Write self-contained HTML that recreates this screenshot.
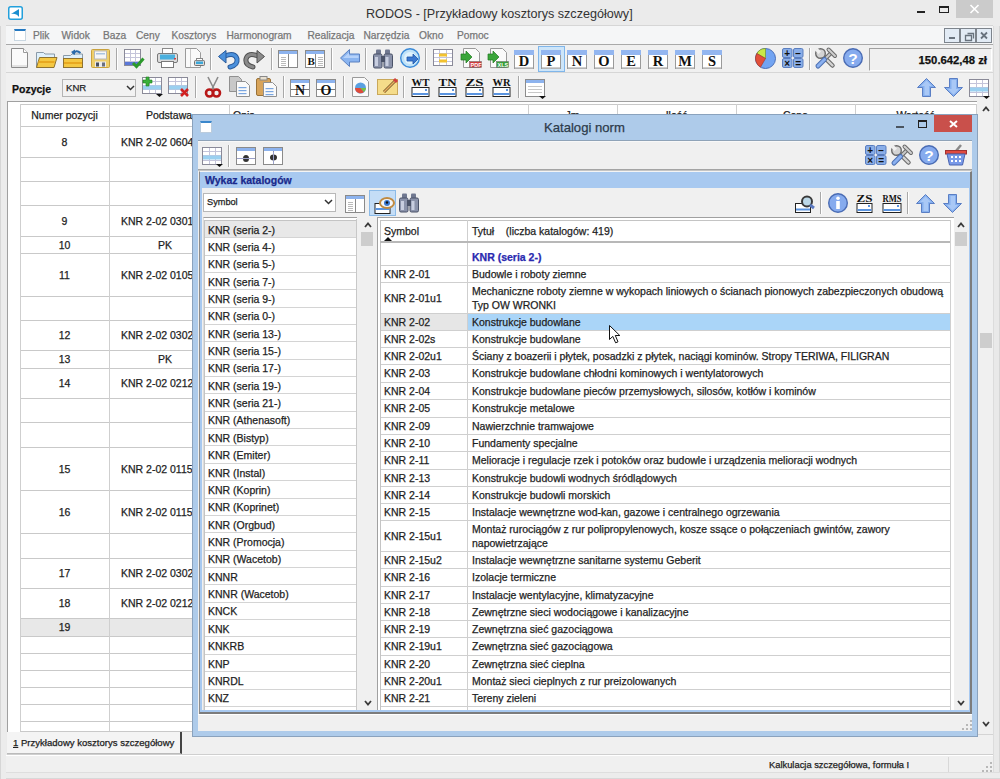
<!DOCTYPE html><html><head><meta charset="utf-8"><style>
html,body{margin:0;padding:0;width:1000px;height:779px;overflow:hidden;background:#f0f0f0;font-family:"Liberation Sans",sans-serif;font-size:10.5px;color:#1e1e1e;position:relative}
div{box-sizing:border-box;-webkit-text-stroke:0.25px currentColor}
</style></head><body>
<div style="position:absolute;left:0px;top:0px;width:1000px;height:779px;background:#ebebeb"></div>
<div style="position:absolute;left:0px;top:0px;width:1000px;height:26px;background:#ebebeb"></div>
<div style="position:absolute;left:366px;top:5.0px;height:18px;line-height:18px;white-space:nowrap;font-size:12.6px;color:#333;-webkit-text-stroke:0">RODOS - [Przykładowy kosztorys szczegółowy]</div>
<svg style="position:absolute;left:8px;top:6px" width="15" height="14" viewBox="0 0 15 14"><rect x="0.75" y="0.75" width="13.5" height="12.5" rx="2" fill="#fff" stroke="#22a0dc" stroke-width="1.5"/><path d="M3 8 L11 3 L11 11 Q8 7 3 8Z" fill="#1a8fd0"/></svg>
<div style="position:absolute;left:917px;top:11px;width:8px;height:2px;background:#222"></div>
<div style="position:absolute;left:939px;top:6px;width:10px;height:7px;border:1px solid #222;border-top-width:2px"></div>
<div style="position:absolute;left:956px;top:0px;width:37px;height:18px;background:#cbcbcb"></div>
<svg style="position:absolute;left:969px;top:4px" width="11" height="10"><path d="M1.5 1L9.5 9M9.5 1L1.5 9" stroke="#fff" stroke-width="1.6"/></svg>
<div style="position:absolute;left:6px;top:25px;width:987px;height:20px;background:#f5f6f7;border-top:1px solid #d6d6d6;border-bottom:1px solid #a9a9a9"></div>
<div style="position:absolute;left:14px;top:29px;width:12px;height:12px;background:#fff;border:1px solid #c9d6e0;border-top:2px solid #2479c2"></div>
<div style="position:absolute;left:33px;top:28.5px;height:14px;line-height:14px;white-space:nowrap;font-size:10.2px;color:#777">Plik</div>
<div style="position:absolute;left:61.5px;top:28.5px;height:14px;line-height:14px;white-space:nowrap;font-size:10.2px;color:#777">Widok</div>
<div style="position:absolute;left:103px;top:28.5px;height:14px;line-height:14px;white-space:nowrap;font-size:10.2px;color:#777">Baza</div>
<div style="position:absolute;left:136px;top:28.5px;height:14px;line-height:14px;white-space:nowrap;font-size:10.2px;color:#777">Ceny</div>
<div style="position:absolute;left:171.5px;top:28.5px;height:14px;line-height:14px;white-space:nowrap;font-size:10.2px;color:#777">Kosztorys</div>
<div style="position:absolute;left:226.5px;top:28.5px;height:14px;line-height:14px;white-space:nowrap;font-size:10.2px;color:#777">Harmonogram</div>
<div style="position:absolute;left:307.5px;top:28.5px;height:14px;line-height:14px;white-space:nowrap;font-size:10.2px;color:#777">Realizacja</div>
<div style="position:absolute;left:363.5px;top:28.5px;height:14px;line-height:14px;white-space:nowrap;font-size:10.2px;color:#777">Narzędzia</div>
<div style="position:absolute;left:419px;top:28.5px;height:14px;line-height:14px;white-space:nowrap;font-size:10.2px;color:#777">Okno</div>
<div style="position:absolute;left:457px;top:28.5px;height:14px;line-height:14px;white-space:nowrap;font-size:10.2px;color:#777">Pomoc</div>
<div style="position:absolute;left:944px;top:28px;width:16px;height:15px;background:#e2ebf5;border:1px solid #7d848c"></div>
<div style="position:absolute;left:960px;top:28px;width:16px;height:15px;background:#e2ebf5;border:1px solid #7d848c"></div>
<div style="position:absolute;left:976px;top:28px;width:16px;height:15px;background:#e2ebf5;border:1px solid #7d848c"></div>
<svg style="position:absolute;left:944px;top:28px" width="48" height="15"><rect x="5" y="9" width="6" height="2" fill="#69737e"/><path d="M21.5 7.5h6v5h-6z M23.5 5.5h6v5" fill="none" stroke="#69737e" stroke-width="1.3"/><path d="M37 4.5L43 10.5M43 4.5L37 10.5" stroke="#69737e" stroke-width="1.8"/></svg>
<div style="position:absolute;left:6px;top:45px;width:987px;height:28px;background:#f0f0f0;border-bottom:1px solid #d6d6d6"></div>
<div style="position:absolute;left:6px;top:73px;width:987px;height:28px;background:#f0f0f0"></div>
<div style="position:absolute;left:12px;top:81.5px;height:14px;line-height:14px;white-space:nowrap;font-weight:bold;font-size:10.5px;color:#111">Pozycje</div>
<div style="position:absolute;left:62px;top:79px;width:74px;height:18px;background:#f2f2f2;border:1px solid #b4b4b4"></div>
<div style="position:absolute;left:66px;top:81.0px;height:14px;line-height:14px;white-space:nowrap;font-size:9.6px">KNR</div>
<div style="position:absolute;left:7px;top:101px;width:970px;height:631px;background:#fff;border-top:1px solid #a0a0a0;border-left:1px solid #a0a0a0"></div>
<div style="position:absolute;left:20px;top:104px;width:956px;height:22px;background:#fff"></div>
<div style="position:absolute;left:20px;top:619px;width:956px;height:17px;background:#e8e8e8"></div>
<div style="position:absolute;left:20px;top:104px;width:956px;height:1px;background:#c9c9c9"></div>
<div style="position:absolute;left:20px;top:126px;width:956px;height:1px;background:#c9c9c9"></div>
<div style="position:absolute;left:20px;top:157px;width:956px;height:1px;background:#c9c9c9"></div>
<div style="position:absolute;left:20px;top:181px;width:956px;height:1px;background:#c9c9c9"></div>
<div style="position:absolute;left:20px;top:205px;width:956px;height:1px;background:#c9c9c9"></div>
<div style="position:absolute;left:20px;top:236px;width:956px;height:1px;background:#c9c9c9"></div>
<div style="position:absolute;left:20px;top:253px;width:956px;height:1px;background:#c9c9c9"></div>
<div style="position:absolute;left:20px;top:296px;width:956px;height:1px;background:#c9c9c9"></div>
<div style="position:absolute;left:20px;top:320px;width:956px;height:1px;background:#c9c9c9"></div>
<div style="position:absolute;left:20px;top:350px;width:956px;height:1px;background:#c9c9c9"></div>
<div style="position:absolute;left:20px;top:368px;width:956px;height:1px;background:#c9c9c9"></div>
<div style="position:absolute;left:20px;top:398px;width:956px;height:1px;background:#c9c9c9"></div>
<div style="position:absolute;left:20px;top:422px;width:956px;height:1px;background:#c9c9c9"></div>
<div style="position:absolute;left:20px;top:447px;width:956px;height:1px;background:#c9c9c9"></div>
<div style="position:absolute;left:20px;top:490px;width:956px;height:1px;background:#c9c9c9"></div>
<div style="position:absolute;left:20px;top:533px;width:956px;height:1px;background:#c9c9c9"></div>
<div style="position:absolute;left:20px;top:558px;width:956px;height:1px;background:#c9c9c9"></div>
<div style="position:absolute;left:20px;top:588px;width:956px;height:1px;background:#c9c9c9"></div>
<div style="position:absolute;left:20px;top:618px;width:956px;height:1px;background:#c9c9c9"></div>
<div style="position:absolute;left:20px;top:636px;width:956px;height:1px;background:#c9c9c9"></div>
<div style="position:absolute;left:20px;top:653px;width:956px;height:1px;background:#c9c9c9"></div>
<div style="position:absolute;left:20px;top:670px;width:956px;height:1px;background:#c9c9c9"></div>
<div style="position:absolute;left:20px;top:687px;width:956px;height:1px;background:#c9c9c9"></div>
<div style="position:absolute;left:20px;top:704px;width:956px;height:1px;background:#c9c9c9"></div>
<div style="position:absolute;left:20px;top:721px;width:956px;height:1px;background:#c9c9c9"></div>
<div style="position:absolute;left:20px;top:731px;width:956px;height:1px;background:#c9c9c9"></div>
<div style="position:absolute;left:20px;top:104px;width:1px;height:627px;background:#cfcfcf"></div>
<div style="position:absolute;left:109px;top:104px;width:1px;height:627px;background:#cfcfcf"></div>
<div style="position:absolute;left:229px;top:104px;width:1px;height:627px;background:#cfcfcf"></div>
<div style="position:absolute;left:528px;top:104px;width:1px;height:627px;background:#cfcfcf"></div>
<div style="position:absolute;left:617px;top:104px;width:1px;height:627px;background:#cfcfcf"></div>
<div style="position:absolute;left:736px;top:104px;width:1px;height:627px;background:#cfcfcf"></div>
<div style="position:absolute;left:855px;top:104px;width:1px;height:627px;background:#cfcfcf"></div>
<div style="position:absolute;left:976px;top:104px;width:1px;height:627px;background:#cfcfcf"></div>
<div style="position:absolute;left:20px;top:108.0px;height:14px;line-height:14px;white-space:nowrap;width:89px;text-align:center;">Numer pozycji</div>
<div style="position:absolute;left:109px;top:108.0px;height:14px;line-height:14px;white-space:nowrap;width:120px;text-align:center;">Podstawa</div>
<div style="position:absolute;left:233px;top:108.0px;height:14px;line-height:14px;white-space:nowrap;">Opis</div>
<div style="position:absolute;left:528px;top:108.0px;height:14px;line-height:14px;white-space:nowrap;width:89px;text-align:center;">Jm</div>
<div style="position:absolute;left:617px;top:108.0px;height:14px;line-height:14px;white-space:nowrap;width:119px;text-align:center;">Ilość</div>
<div style="position:absolute;left:736px;top:108.0px;height:14px;line-height:14px;white-space:nowrap;width:119px;text-align:center;">Cena</div>
<div style="position:absolute;left:855px;top:108.0px;height:14px;line-height:14px;white-space:nowrap;width:121px;text-align:center;">Wartość</div>
<div style="position:absolute;left:20px;top:134.5px;height:14px;line-height:14px;white-space:nowrap;width:89px;text-align:center;">8</div>
<div style="position:absolute;left:121px;top:134.5px;height:14px;line-height:14px;white-space:nowrap;">KNR 2-02 0604</div>
<div style="position:absolute;left:20px;top:213.5px;height:14px;line-height:14px;white-space:nowrap;width:89px;text-align:center;">9</div>
<div style="position:absolute;left:121px;top:213.5px;height:14px;line-height:14px;white-space:nowrap;">KNR 2-02 0301</div>
<div style="position:absolute;left:20px;top:237.5px;height:14px;line-height:14px;white-space:nowrap;width:89px;text-align:center;">10</div>
<div style="position:absolute;left:105px;top:237.5px;height:14px;line-height:14px;white-space:nowrap;width:120px;text-align:center;">PK</div>
<div style="position:absolute;left:20px;top:267.5px;height:14px;line-height:14px;white-space:nowrap;width:89px;text-align:center;">11</div>
<div style="position:absolute;left:121px;top:267.5px;height:14px;line-height:14px;white-space:nowrap;">KNR 2-02 0105</div>
<div style="position:absolute;left:20px;top:328.0px;height:14px;line-height:14px;white-space:nowrap;width:89px;text-align:center;">12</div>
<div style="position:absolute;left:121px;top:328.0px;height:14px;line-height:14px;white-space:nowrap;">KNR 2-02 0302</div>
<div style="position:absolute;left:20px;top:352.0px;height:14px;line-height:14px;white-space:nowrap;width:89px;text-align:center;">13</div>
<div style="position:absolute;left:105px;top:352.0px;height:14px;line-height:14px;white-space:nowrap;width:120px;text-align:center;">PK</div>
<div style="position:absolute;left:20px;top:376.0px;height:14px;line-height:14px;white-space:nowrap;width:89px;text-align:center;">14</div>
<div style="position:absolute;left:121px;top:376.0px;height:14px;line-height:14px;white-space:nowrap;">KNR 2-02 0212</div>
<div style="position:absolute;left:20px;top:461.5px;height:14px;line-height:14px;white-space:nowrap;width:89px;text-align:center;">15</div>
<div style="position:absolute;left:121px;top:461.5px;height:14px;line-height:14px;white-space:nowrap;">KNR 2-02 0115</div>
<div style="position:absolute;left:20px;top:504.5px;height:14px;line-height:14px;white-space:nowrap;width:89px;text-align:center;">16</div>
<div style="position:absolute;left:121px;top:504.5px;height:14px;line-height:14px;white-space:nowrap;">KNR 2-02 0115</div>
<div style="position:absolute;left:20px;top:566.0px;height:14px;line-height:14px;white-space:nowrap;width:89px;text-align:center;">17</div>
<div style="position:absolute;left:121px;top:566.0px;height:14px;line-height:14px;white-space:nowrap;">KNR 2-02 0302</div>
<div style="position:absolute;left:20px;top:596.0px;height:14px;line-height:14px;white-space:nowrap;width:89px;text-align:center;">18</div>
<div style="position:absolute;left:121px;top:596.0px;height:14px;line-height:14px;white-space:nowrap;">KNR 2-02 0212</div>
<div style="position:absolute;left:20px;top:620.0px;height:14px;line-height:14px;white-space:nowrap;width:89px;text-align:center;">19</div>
<div style="position:absolute;left:977px;top:101px;width:16px;height:634px;background:#f0f0f0"></div>
<div style="position:absolute;left:980px;top:333px;width:12px;height:15px;background:#cdcdcd"></div>
<svg style="position:absolute;left:982px;top:106px" width="8" height="6"><path d="M1 5L4 1.5L7 5" fill="none" stroke="#3a3a3a" stroke-width="1.8"/></svg>
<svg style="position:absolute;left:982px;top:721px" width="8" height="6"><path d="M1 1L4 4.5L7 1" fill="none" stroke="#3a3a3a" stroke-width="1.8"/></svg>
<div style="position:absolute;left:7px;top:732px;width:986px;height:23px;background:#f0f0f0"></div>
<div style="position:absolute;left:7px;top:754px;width:986px;height:1px;background:#cfcfcf"></div>
<div style="position:absolute;left:977px;top:734px;width:16px;height:1px;background:#d4d4d4"></div>
<div style="position:absolute;left:7px;top:732px;width:175px;height:22px;background:#f4f4f4;border-right:2px solid #444;border-bottom:1px solid #bbb"></div>
<div style="position:absolute;left:13px;top:736.0px;height:14px;line-height:14px;white-space:nowrap;font-size:9.55px;color:#222"><u>1</u> Przykładowy kosztorys szczegółowy</div>
<div style="position:absolute;left:6px;top:755px;width:987px;height:17px;background:#f0f0f0;border-top:1px solid #fff"></div>
<div style="position:absolute;left:769px;top:758.0px;height:14px;line-height:14px;white-space:nowrap;font-size:9.35px;color:#222">Kalkulacja szczegółowa, formuła I</div>
<div style="position:absolute;left:948px;top:757px;width:1px;height:16px;background:#d8d8d8"></div>
<div style="position:absolute;left:993px;top:26px;width:7px;height:753px;background:#e9e9e9;border-left:1px solid #dcdcdc;border-right:1px solid #d6d6d6"></div>
<div style="position:absolute;left:0px;top:772px;width:1000px;height:7px;background:#ececec;border-top:1px solid #dedede;border-bottom:1px solid #d8d8d8"></div>
<div style="position:absolute;left:0px;top:26px;width:6px;height:753px;background:#ececec;border-left:1px solid #d6d6d6"></div>
<svg style="position:absolute;left:11px;top:48px;overflow:visible" width="17" height="20" viewBox="0 0 17 20"><path d="M0.5 0.5H12.5L16.5 4.5V19.5H0.5Z" fill="#fafafa" stroke="#8c8c8c"/><path d="M12.5 0.5V4.5H16.5" fill="#fff" stroke="#9a9a9a"/><rect x="1" y="17" width="15" height="2" fill="#e2e2e2"/></svg>
<svg style="position:absolute;left:36px;top:51px;overflow:visible" width="22" height="17" viewBox="0 0 22 17"><path d="M0.5 16.5V1.5H7.5L9 3H18.5V7" fill="#dff0fb" stroke="#8a9aa8"/><path d="M0.5 16.5L3.5 6.5H21L18 16.5Z" fill="#f5c842" stroke="#8f7330"/><rect x="2.5" y="10" width="16" height="2" fill="#e8a820"/></svg>
<svg style="position:absolute;left:63px;top:49px;overflow:visible" width="20" height="19" viewBox="0 0 20 19"><path d="M0.5 18.5V6.5H7.5L9 5H19.5V18.5Z" fill="#dff0fb" stroke="#8a9aa8"/><rect x="0.5" y="9.5" width="19" height="9" fill="#f5c842" stroke="#8f7330"/><rect x="1" y="13" width="18" height="2" fill="#e8a820"/><path d="M10 5 Q13 0 17.5 4" fill="none" stroke="#2a6aaa" stroke-width="2"/><path d="M8 3L12 0.5L12 6Z" fill="#2a6aaa"/></svg>
<svg style="position:absolute;left:91px;top:49px;overflow:visible" width="19" height="19" viewBox="0 0 19 19"><rect x="0.5" y="0.5" width="18" height="18" rx="1" fill="#efcf6a" stroke="#c9a23e"/><rect x="3.5" y="2" width="12" height="8" fill="#f6f6f6" stroke="#b9b9b9"/><rect x="5" y="4" width="9" height="1.5" fill="#a9c4e0"/><rect x="4" y="12.5" width="11" height="5.5" fill="#ececec"/><rect x="5" y="13.5" width="3" height="4" fill="#4a5060"/><rect x="11" y="13.5" width="3" height="4" fill="#6a7080"/></svg>
<div style="position:absolute;left:116px;top:48px;width:1px;height:22px;background:#a8a8a8"></div>
<div style="position:absolute;left:117px;top:48px;width:1px;height:22px;background:#ffffff"></div>
<svg style="position:absolute;left:124px;top:49px;overflow:visible" width="20" height="19" viewBox="0 0 20 19"><rect x="0.5" y="0.5" width="16" height="16" fill="#fff" stroke="#8a8a98"/><line x1="1" y1="4.5" x2="16" y2="4.5" stroke="#c4c4da"/><line x1="1" y1="8.5" x2="16" y2="8.5" stroke="#c4c4da"/><line x1="1" y1="12.5" x2="16" y2="12.5" stroke="#c4c4da"/><line x1="6.5" y1="1" x2="6.5" y2="16" stroke="#c4c4da"/><line x1="11.5" y1="1" x2="11.5" y2="16" stroke="#c4c4da"/><rect x="1" y="13" width="15" height="3" fill="#5b78d8"/><path d="M9 14L12.5 17.5L19.5 9.5" fill="none" stroke="#2c9a2c" stroke-width="3"/></svg>
<div style="position:absolute;left:150px;top:48px;width:1px;height:22px;background:#a8a8a8"></div>
<div style="position:absolute;left:151px;top:48px;width:1px;height:22px;background:#ffffff"></div>
<svg style="position:absolute;left:157px;top:48px;overflow:visible" width="21" height="20" viewBox="0 0 21 20"><rect x="5.5" y="0.5" width="10" height="6" fill="#fff" stroke="#8a8a8a"/><rect x="0.5" y="5.5" width="20" height="9" rx="1.5" fill="#dcdcdc" stroke="#7a7a7a"/><rect x="3" y="6.5" width="15" height="5" fill="#4bb0de"/><rect x="4.5" y="13.5" width="12" height="6" fill="#fff" stroke="#7a7a7a"/><rect x="17" y="10" width="2" height="1.5" fill="#d04040"/></svg>
<svg style="position:absolute;left:185px;top:48px;overflow:visible" width="20" height="20" viewBox="0 0 20 20"><path d="M0.5 0.5H11.5L15.5 4.5V19.5H0.5Z" fill="#fafafa" stroke="#9a9a9a"/><line x1="5.5" y1="1" x2="5.5" y2="19" stroke="#c8c8c8"/><rect x="9.5" y="12.5" width="10" height="5" rx="1" fill="#d8d8d8" stroke="#707070"/><rect x="11" y="13.5" width="7" height="2.5" fill="#3ba8da"/><rect x="11.5" y="10.5" width="6" height="2" fill="#fff" stroke="#888"/></svg>
<div style="position:absolute;left:210px;top:48px;width:1px;height:22px;background:#a8a8a8"></div>
<div style="position:absolute;left:211px;top:48px;width:1px;height:22px;background:#ffffff"></div>
<svg style="position:absolute;left:218px;top:50px;overflow:visible" width="21" height="18" viewBox="0 0 21 18"><path d="M7 6 Q17 2 19 9 Q20 15 12 17" fill="none" stroke="#2a5a9a" stroke-width="5" stroke-linecap="round"/><path d="M7 6 Q17 2 19 9 Q20 15 12 17" fill="none" stroke="#4a90dc" stroke-width="3" stroke-linecap="round"/><path d="M0.5 6.5L8 0.5V13Z" fill="#4a90dc" stroke="#2a5a9a"/></svg>
<svg style="position:absolute;left:244px;top:50px;overflow:visible" width="21" height="18" viewBox="0 0 21 18"><g transform="translate(21,0) scale(-1,1)"><path d="M7 6 Q17 2 19 9 Q20 15 12 17" fill="none" stroke="#505050" stroke-width="5" stroke-linecap="round"/><path d="M7 6 Q17 2 19 9 Q20 15 12 17" fill="none" stroke="#8a8a8a" stroke-width="3" stroke-linecap="round"/><path d="M0.5 6.5L8 0.5V13Z" fill="#8a8a8a" stroke="#505050"/></g></svg>
<div style="position:absolute;left:271px;top:48px;width:1px;height:22px;background:#a8a8a8"></div>
<div style="position:absolute;left:272px;top:48px;width:1px;height:22px;background:#ffffff"></div>
<svg style="position:absolute;left:278px;top:50px;overflow:visible" width="20" height="18" viewBox="0 0 20 18"><rect x="0.5" y="0.5" width="19" height="17" fill="#fff" stroke="#8a8a8a"/><rect x="1" y="1" width="18" height="3" fill="#8db3ee"/><line x1="10.5" y1="4" x2="10.5" y2="17" stroke="#8a8a8a"/><line x1="3" y1="7.5" x2="8" y2="7.5" stroke="#bbb"/><line x1="3" y1="9.5" x2="8" y2="9.5" stroke="#bbb"/><line x1="3" y1="11.5" x2="8" y2="11.5" stroke="#bbb"/><line x1="3" y1="13.5" x2="8" y2="13.5" stroke="#bbb"/><line x1="3" y1="15.5" x2="8" y2="15.5" stroke="#bbb"/></svg>
<svg style="position:absolute;left:305px;top:50px;overflow:visible" width="20" height="18" viewBox="0 0 20 18"><rect x="0.5" y="0.5" width="19" height="17" fill="#fff" stroke="#8a8a8a"/><rect x="1" y="1" width="18" height="3" fill="#8db3ee"/><line x1="10.5" y1="4" x2="10.5" y2="17" stroke="#8a8a8a"/><line x1="13" y1="7.5" x2="18" y2="7.5" stroke="#bbb"/><line x1="13" y1="9.5" x2="18" y2="9.5" stroke="#bbb"/><line x1="13" y1="11.5" x2="18" y2="11.5" stroke="#bbb"/><line x1="13" y1="13.5" x2="18" y2="13.5" stroke="#bbb"/><line x1="13" y1="15.5" x2="18" y2="15.5" stroke="#bbb"/><text x="2.5" y="15" font-family="Liberation Serif" font-weight="bold" font-size="11" fill="#111">B</text></svg>
<div style="position:absolute;left:331px;top:48px;width:1px;height:22px;background:#a8a8a8"></div>
<div style="position:absolute;left:332px;top:48px;width:1px;height:22px;background:#ffffff"></div>
<svg style="position:absolute;left:340px;top:49px;overflow:visible" width="20" height="18" viewBox="0 0 20 18"><path d="M0.5 9L9.5 0.5V5H19.5V13H9.5V17.5Z" fill="#8ab4f0" stroke="#5a80c0"/><path d="M3 9L9 3.5V6.5H18.5V9Z" fill="#b6d2fa"/></svg>
<div style="position:absolute;left:365px;top:48px;width:1px;height:22px;background:#a8a8a8"></div>
<div style="position:absolute;left:366px;top:48px;width:1px;height:22px;background:#ffffff"></div>
<svg style="position:absolute;left:373px;top:49px;overflow:visible" width="20" height="19" viewBox="0 0 20 19"><rect x="3" y="0.5" width="5" height="5" rx="1" fill="#707890"/><rect x="12" y="0.5" width="5" height="5" rx="1" fill="#707890"/><rect x="0.5" y="5" width="8.5" height="14" rx="1.5" fill="#8a92aa" stroke="#4a5268"/><rect x="11" y="5" width="8.5" height="14" rx="1.5" fill="#8a92aa" stroke="#4a5268"/><rect x="8" y="7" width="4" height="6" fill="#4a5268"/><rect x="2" y="8" width="3" height="9" fill="#c8cee0"/><rect x="12.5" y="8" width="3" height="9" fill="#c8cee0"/></svg>
<svg style="position:absolute;left:400px;top:48px;overflow:visible" width="20" height="20" viewBox="0 0 20 20"><circle cx="10" cy="10" r="9.3" fill="#bfe2f8" stroke="#3a8ad8" stroke-width="1.4"/><circle cx="10" cy="10" r="6" fill="#dff2fd"/><path d="M7 9H13V6L18 11L13 16V13H7Z" fill="#3a78d0" stroke="#1e56a8" stroke-width="0.8"/></svg>
<div style="position:absolute;left:425px;top:48px;width:1px;height:22px;background:#a8a8a8"></div>
<div style="position:absolute;left:426px;top:48px;width:1px;height:22px;background:#ffffff"></div>
<svg style="position:absolute;left:433px;top:49px;overflow:visible" width="20" height="17" viewBox="0 0 20 17"><rect x="0.5" y="0.5" width="19" height="16" fill="#fff" stroke="#8a8a98"/><line x1="1" y1="4.5" x2="19" y2="4.5" stroke="#c4c4da"/><line x1="1" y1="8.5" x2="19" y2="8.5" stroke="#c4c4da"/><line x1="1" y1="12.5" x2="19" y2="12.5" stroke="#c4c4da"/><line x1="6.5" y1="1" x2="6.5" y2="16" stroke="#c4c4da"/><line x1="13.5" y1="1" x2="13.5" y2="16" stroke="#c4c4da"/><rect x="6" y="4.5" width="8" height="3" fill="#f2c230"/><rect x="6" y="10.5" width="8" height="3" fill="#f2c230"/></svg>
<svg style="position:absolute;left:461px;top:48px;overflow:visible" width="20" height="20" viewBox="0 0 20 20"><path d="M2.5 0.5H14.5L18.5 4.5V19.5H2.5Z" fill="#fafafa" stroke="#9a9a9a"/><path d="M0 6H5V3L11 9L5 15V12H0Z" fill="#3aa63a" stroke="#207a20" stroke-width="0.7"/><rect x="8.5" y="13.5" width="12" height="6" fill="#d03a3a" stroke="#666" stroke-width="0.5"/><text x="9.5" y="19" font-family="Liberation Sans" font-weight="bold" font-size="5.5" fill="#fff">PDF</text></svg>
<svg style="position:absolute;left:488px;top:48px;overflow:visible" width="20" height="20" viewBox="0 0 20 20"><path d="M2.5 0.5H14.5L18.5 4.5V19.5H2.5Z" fill="#fafafa" stroke="#9a9a9a"/><path d="M0 6H5V3L11 9L5 15V12H0Z" fill="#3aa63a" stroke="#207a20" stroke-width="0.7"/><rect x="8.5" y="13.5" width="12" height="6" fill="#3aa03a" stroke="#666" stroke-width="0.5"/><text x="9.5" y="19" font-family="Liberation Sans" font-weight="bold" font-size="5.5" fill="#fff">XLS</text></svg>
<div style="position:absolute;left:538px;top:46px;width:27px;height:26px;background:#cde5f9;border:1px solid #80b6ea"></div>
<svg style="position:absolute;left:514px;top:50px;overflow:visible" width="20" height="19" viewBox="0 0 20 19"><rect x="0.5" y="0.5" width="19" height="18" fill="#fff" stroke="#9a9a9a"/><rect x="0" y="0" width="20" height="5" fill="#93b6f0"/><rect x="1" y="17" width="18" height="1.5" fill="#cfcfcf"/><text x="10" y="16.2" text-anchor="middle" font-family="Liberation Serif" font-weight="bold" font-size="14.5" fill="#111">D</text></svg>
<svg style="position:absolute;left:541px;top:50px;overflow:visible" width="20" height="19" viewBox="0 0 20 19"><rect x="0.5" y="0.5" width="19" height="18" fill="#fff" stroke="#9a9a9a"/><rect x="0" y="0" width="20" height="5" fill="#93b6f0"/><rect x="1" y="17" width="18" height="1.5" fill="#cfcfcf"/><text x="10" y="16.2" text-anchor="middle" font-family="Liberation Serif" font-weight="bold" font-size="14.5" fill="#111">P</text></svg>
<svg style="position:absolute;left:567px;top:50px;overflow:visible" width="20" height="19" viewBox="0 0 20 19"><rect x="0.5" y="0.5" width="19" height="18" fill="#fff" stroke="#9a9a9a"/><rect x="0" y="0" width="20" height="5" fill="#93b6f0"/><rect x="1" y="17" width="18" height="1.5" fill="#cfcfcf"/><text x="10" y="16.2" text-anchor="middle" font-family="Liberation Serif" font-weight="bold" font-size="14.5" fill="#111">N</text></svg>
<svg style="position:absolute;left:594px;top:50px;overflow:visible" width="20" height="19" viewBox="0 0 20 19"><rect x="0.5" y="0.5" width="19" height="18" fill="#fff" stroke="#9a9a9a"/><rect x="0" y="0" width="20" height="5" fill="#93b6f0"/><rect x="1" y="17" width="18" height="1.5" fill="#cfcfcf"/><text x="10" y="16.2" text-anchor="middle" font-family="Liberation Serif" font-weight="bold" font-size="14.5" fill="#111">O</text></svg>
<svg style="position:absolute;left:621px;top:50px;overflow:visible" width="20" height="19" viewBox="0 0 20 19"><rect x="0.5" y="0.5" width="19" height="18" fill="#fff" stroke="#9a9a9a"/><rect x="0" y="0" width="20" height="5" fill="#93b6f0"/><rect x="1" y="17" width="18" height="1.5" fill="#cfcfcf"/><text x="10" y="16.2" text-anchor="middle" font-family="Liberation Serif" font-weight="bold" font-size="14.5" fill="#111">E</text></svg>
<svg style="position:absolute;left:648px;top:50px;overflow:visible" width="20" height="19" viewBox="0 0 20 19"><rect x="0.5" y="0.5" width="19" height="18" fill="#fff" stroke="#9a9a9a"/><rect x="0" y="0" width="20" height="5" fill="#93b6f0"/><rect x="1" y="17" width="18" height="1.5" fill="#cfcfcf"/><text x="10" y="16.2" text-anchor="middle" font-family="Liberation Serif" font-weight="bold" font-size="14.5" fill="#111">R</text></svg>
<svg style="position:absolute;left:675px;top:50px;overflow:visible" width="20" height="19" viewBox="0 0 20 19"><rect x="0.5" y="0.5" width="19" height="18" fill="#fff" stroke="#9a9a9a"/><rect x="0" y="0" width="20" height="5" fill="#93b6f0"/><rect x="1" y="17" width="18" height="1.5" fill="#cfcfcf"/><text x="10" y="16.2" text-anchor="middle" font-family="Liberation Serif" font-weight="bold" font-size="14.5" fill="#111">M</text></svg>
<svg style="position:absolute;left:702px;top:50px;overflow:visible" width="20" height="19" viewBox="0 0 20 19"><rect x="0.5" y="0.5" width="19" height="18" fill="#fff" stroke="#9a9a9a"/><rect x="0" y="0" width="20" height="5" fill="#93b6f0"/><rect x="1" y="17" width="18" height="1.5" fill="#cfcfcf"/><text x="10" y="16.2" text-anchor="middle" font-family="Liberation Serif" font-weight="bold" font-size="14.5" fill="#111">S</text></svg>
<svg style="position:absolute;left:755px;top:48px;overflow:visible" width="22" height="21" viewBox="0 0 22 21"><circle cx="10.5" cy="10.5" r="10" fill="#72a4f2" stroke="#4a6fb8"/><path d="M10.5 10.5L10.5 0.5A10 10 0 0 0 1.84 5.5Z" fill="#c8e848" stroke="#6a8a20" stroke-width="0.6"/><path d="M10.5 10.5L1.84 5.5A10 10 0 0 0 5.5 19.16Z" fill="#e2503a" stroke="#a83020" stroke-width="0.6"/></svg>
<svg style="position:absolute;left:782px;top:48px;overflow:visible" width="22" height="20" viewBox="0 0 22 20"><rect x="0.5" y="0.5" width="9.5" height="9" rx="1.5" fill="#8aaee8" stroke="#5a7ec0"/><text x="5.2" y="8.6" text-anchor="middle" font-family="Liberation Sans" font-weight="bold" font-size="10" fill="#111">+</text><rect x="11.5" y="0.5" width="9.5" height="9" rx="1.5" fill="#8aaee8" stroke="#5a7ec0"/><text x="16.2" y="8.6" text-anchor="middle" font-family="Liberation Sans" font-weight="bold" font-size="10" fill="#111">−</text><rect x="0.5" y="10.5" width="9.5" height="9" rx="1.5" fill="#8aaee8" stroke="#5a7ec0"/><text x="5.2" y="18.6" text-anchor="middle" font-family="Liberation Sans" font-weight="bold" font-size="10" fill="#111">×</text><rect x="11.5" y="10.5" width="9.5" height="9" rx="1.5" fill="#8aaee8" stroke="#5a7ec0"/><text x="16.2" y="18.6" text-anchor="middle" font-family="Liberation Sans" font-weight="bold" font-size="10" fill="#111">=</text></svg>
<div style="position:absolute;left:809px;top:48px;width:1px;height:22px;background:#a8a8a8"></div>
<div style="position:absolute;left:810px;top:48px;width:1px;height:22px;background:#ffffff"></div>
<svg style="position:absolute;left:815px;top:48px;overflow:visible" width="22" height="20" viewBox="0 0 22 20"><path d="M7 7L17.5 17.5" stroke="#6a6a6a" stroke-width="4.5" stroke-linecap="round"/><path d="M7 7L17.5 17.5" stroke="#d4d4d4" stroke-width="2.4" stroke-linecap="round"/><circle cx="5.5" cy="5.5" r="4.8" fill="#d4d4d4" stroke="#6a6a6a" stroke-width="1.4"/><path d="M0 2.5L3.5 6L6 3.5L2.5 0Z" fill="#f0f0f0"/><path d="M10 11L17 4" stroke="#6a6a6a" stroke-width="4"/><path d="M10 11L17 4" stroke="#c8c8c8" stroke-width="2"/><path d="M13.5 1.5L20 8" stroke="#6a6a6a" stroke-width="4" stroke-linecap="round"/><path d="M13.5 1.5L20 8" stroke="#d0d0d0" stroke-width="2" stroke-linecap="round"/><path d="M3 18L9.5 11.5" stroke="#4a6eb0" stroke-width="5" stroke-linecap="round"/><path d="M3 18L9.5 11.5" stroke="#8ab0f0" stroke-width="3" stroke-linecap="round"/></svg>
<svg style="position:absolute;left:843px;top:48px;overflow:visible" width="20" height="20" viewBox="0 0 20 20"><circle cx="10" cy="10" r="9.3" fill="#86abee" stroke="#4a6cb4" stroke-width="1.4"/><text x="10" y="15.6" text-anchor="middle" font-family="Liberation Sans" font-weight="bold" font-size="15.5" fill="#fff">?</text></svg>
<div style="position:absolute;left:869px;top:48px;width:123px;height:23px;background:#f0f0f0;border-top:1px solid #a0a0a0;border-left:1px solid #a0a0a0;border-bottom:1px solid #fff;border-right:1px solid #fff"></div>
<div style="position:absolute;left:880px;top:52.5px;height:14px;line-height:14px;white-space:nowrap;width:107px;text-align:right;font-weight:bold;font-size:11.3px;color:#111">150.642,48 zł</div>
<svg style="position:absolute;left:142px;top:77px;overflow:visible" width="20" height="17" viewBox="0 0 20 17"><rect x="0.5" y="0.5" width="19" height="16" fill="#fff" stroke="#8a8a98"/><line x1="1" y1="4.5" x2="19" y2="4.5" stroke="#c4c4da"/><line x1="1" y1="8.5" x2="19" y2="8.5" stroke="#c4c4da"/><line x1="1" y1="12.5" x2="19" y2="12.5" stroke="#c4c4da"/><line x1="7.5" y1="1" x2="7.5" y2="16" stroke="#c4c4da"/><line x1="13.5" y1="1" x2="13.5" y2="16" stroke="#c4c4da"/><rect x="1" y="8.5" width="18" height="4" fill="#9bd0f0"/><path d="M4 0H7V3H10V6H7V9H4V6H1V3H4Z" fill="#3ab03a" stroke="#208020" stroke-width="0.6"/><path d="M14 17H21L17.5 20Z" fill="#111"/></svg>
<svg style="position:absolute;left:168px;top:77px;overflow:visible" width="20" height="17" viewBox="0 0 20 17"><rect x="0.5" y="0.5" width="19" height="16" fill="#fff" stroke="#8a8a98"/><line x1="1" y1="4.5" x2="19" y2="4.5" stroke="#c4c4da"/><line x1="1" y1="8.5" x2="19" y2="8.5" stroke="#c4c4da"/><line x1="1" y1="12.5" x2="19" y2="12.5" stroke="#c4c4da"/><line x1="7.5" y1="1" x2="7.5" y2="16" stroke="#c4c4da"/><line x1="13.5" y1="1" x2="13.5" y2="16" stroke="#c4c4da"/><rect x="1" y="8.5" width="18" height="4" fill="#9bd0f0"/><path d="M13 12L20 19M20 12L13 19" stroke="#d02020" stroke-width="2.6"/></svg>
<div style="position:absolute;left:195px;top:76px;width:1px;height:22px;background:#a8a8a8"></div>
<div style="position:absolute;left:196px;top:76px;width:1px;height:22px;background:#ffffff"></div>
<svg style="position:absolute;left:205px;top:77px;overflow:visible" width="16" height="20" viewBox="0 0 16 20"><path d="M3 0L9 12M13 0L7 12" stroke="#8a8a8a" stroke-width="1.6"/><circle cx="4.5" cy="16" r="3.5" fill="none" stroke="#b81818" stroke-width="2.6"/><circle cx="11.5" cy="16" r="3.5" fill="none" stroke="#b81818" stroke-width="2.6"/></svg>
<svg style="position:absolute;left:229px;top:76px;overflow:visible" width="21" height="21" viewBox="0 0 21 21"><path d="M0.5 0.5H9.5L12.5 3.5V15.5H0.5Z" fill="#c8c8c8" stroke="#909090"/><path d="M7.5 5.5H16.5L20.5 9.5V20.5H7.5Z" fill="#fafafa" stroke="#909090"/><rect x="9.5" y="11" width="8" height="1.2" fill="#7aa6e0"/><rect x="9.5" y="14" width="8" height="1.2" fill="#7aa6e0"/><rect x="9.5" y="17" width="8" height="1.2" fill="#7aa6e0"/></svg>
<svg style="position:absolute;left:256px;top:76px;overflow:visible" width="21" height="21" viewBox="0 0 21 21"><rect x="0.5" y="2.5" width="14" height="17" rx="1.5" fill="#d8a45a" stroke="#9a7238"/><rect x="4" y="0.5" width="7" height="3.5" fill="#e8e0d0" stroke="#888"/><path d="M7.5 6.5H16.5L20.5 10.5V20.5H7.5Z" fill="#fafafa" stroke="#909090"/><rect x="9.5" y="12" width="8" height="1.2" fill="#7aa6e0"/><rect x="9.5" y="15" width="8" height="1.2" fill="#7aa6e0"/><rect x="9.5" y="18" width="8" height="1.2" fill="#7aa6e0"/></svg>
<div style="position:absolute;left:283px;top:76px;width:1px;height:22px;background:#a8a8a8"></div>
<div style="position:absolute;left:284px;top:76px;width:1px;height:22px;background:#ffffff"></div>
<svg style="position:absolute;left:290px;top:79px;overflow:visible" width="20" height="18" viewBox="0 0 20 18"><rect x="0.5" y="0.5" width="19" height="17" fill="#fff" stroke="#8c8c8c"/><rect x="1" y="1" width="18" height="3" fill="#8db3ee"/><line x1="1" y1="10.5" x2="19" y2="10.5" stroke="#777"/><text x="10" y="15.5" text-anchor="middle" font-family="Liberation Serif" font-weight="bold" font-size="14" fill="#111">N</text></svg>
<svg style="position:absolute;left:316px;top:79px;overflow:visible" width="20" height="18" viewBox="0 0 20 18"><rect x="0.5" y="0.5" width="19" height="17" fill="#fff" stroke="#8c8c8c"/><rect x="1" y="1" width="18" height="3" fill="#8db3ee"/><line x1="1" y1="10.5" x2="19" y2="10.5" stroke="#777"/><text x="10" y="15.5" text-anchor="middle" font-family="Liberation Serif" font-weight="bold" font-size="14" fill="#111">O</text></svg>
<div style="position:absolute;left:343px;top:76px;width:1px;height:22px;background:#a8a8a8"></div>
<div style="position:absolute;left:344px;top:76px;width:1px;height:22px;background:#ffffff"></div>
<svg style="position:absolute;left:352px;top:77px;overflow:visible" width="17" height="20" viewBox="0 0 17 20"><path d="M0.5 0.5H12.5L16.5 4.5V19.5H0.5Z" fill="#fafafa" stroke="#9a9a9a"/><circle cx="8.5" cy="11" r="5.5" fill="#5aa0e0"/><path d="M8.5 11L3 11A5.5 5.5 0 0 0 12 15Z" fill="#e04a3a"/><path d="M8.5 11L12 15A5.5 5.5 0 0 0 14 11Z" fill="#7ac040"/></svg>
<svg style="position:absolute;left:377px;top:78px;overflow:visible" width="21" height="17" viewBox="0 0 21 17"><rect x="0.5" y="1.5" width="20" height="15" fill="#f5dc8a" stroke="#c9a85a"/><path d="M7 14L19 2" stroke="#7a5a2a" stroke-width="3"/><path d="M7 14L19 2" stroke="#e8b060" stroke-width="1.5"/><path d="M17 1L20 4" stroke="#d04040" stroke-width="3"/></svg>
<div style="position:absolute;left:403px;top:76px;width:1px;height:22px;background:#a8a8a8"></div>
<div style="position:absolute;left:404px;top:76px;width:1px;height:22px;background:#ffffff"></div>
<svg style="position:absolute;left:411px;top:78px;overflow:visible" width="19" height="19" viewBox="0 0 19 19"><text x="9.5" y="7.5" text-anchor="middle" font-family="Liberation Serif" font-weight="bold" font-size="10" fill="#111" textLength="18" lengthAdjust="spacingAndGlyphs">WT</text><rect x="1" y="9.5" width="17" height="9" fill="#fff" stroke="#222"/><rect x="1.5" y="15" width="16" height="2" fill="#5a94e0"/><rect x="14" y="11" width="2" height="2" fill="#5a94e0"/></svg>
<svg style="position:absolute;left:438px;top:78px;overflow:visible" width="19" height="19" viewBox="0 0 19 19"><text x="9.5" y="7.5" text-anchor="middle" font-family="Liberation Serif" font-weight="bold" font-size="10" fill="#111" textLength="18" lengthAdjust="spacingAndGlyphs">TN</text><rect x="1" y="9.5" width="17" height="9" fill="#fff" stroke="#222"/><rect x="1.5" y="15" width="16" height="2" fill="#5a94e0"/><rect x="14" y="11" width="2" height="2" fill="#5a94e0"/></svg>
<svg style="position:absolute;left:465px;top:78px;overflow:visible" width="19" height="19" viewBox="0 0 19 19"><text x="9.5" y="7.5" text-anchor="middle" font-family="Liberation Serif" font-weight="bold" font-size="10" fill="#111" textLength="18" lengthAdjust="spacingAndGlyphs">ZS</text><rect x="1" y="9.5" width="17" height="9" fill="#fff" stroke="#222"/><rect x="1.5" y="15" width="16" height="2" fill="#5a94e0"/><rect x="14" y="11" width="2" height="2" fill="#5a94e0"/></svg>
<svg style="position:absolute;left:492px;top:78px;overflow:visible" width="19" height="19" viewBox="0 0 19 19"><text x="9.5" y="7.5" text-anchor="middle" font-family="Liberation Serif" font-weight="bold" font-size="10" fill="#111" textLength="18" lengthAdjust="spacingAndGlyphs">WR</text><rect x="1" y="9.5" width="17" height="9" fill="#fff" stroke="#222"/><rect x="1.5" y="15" width="16" height="2" fill="#5a94e0"/><rect x="14" y="11" width="2" height="2" fill="#5a94e0"/></svg>
<div style="position:absolute;left:518px;top:76px;width:1px;height:22px;background:#a8a8a8"></div>
<div style="position:absolute;left:519px;top:76px;width:1px;height:22px;background:#ffffff"></div>
<svg style="position:absolute;left:525px;top:79px;overflow:visible" width="20" height="18" viewBox="0 0 20 18"><rect x="0.5" y="0.5" width="19" height="17" fill="#fff" stroke="#8c8c8c"/><rect x="1" y="1" width="18" height="3" fill="#8db3ee"/><line x1="3" y1="7.5" x2="17" y2="7.5" stroke="#c8c8c8"/><line x1="3" y1="10.5" x2="17" y2="10.5" stroke="#c8c8c8"/><line x1="3" y1="13.5" x2="17" y2="13.5" stroke="#c8c8c8"/><path d="M14 17H21L17.5 20Z" fill="#111"/></svg>
<svg style="position:absolute;left:917px;top:78px;overflow:visible" width="19" height="19" viewBox="0 0 19 19"><path d="M9.5 0.5L18.5 9.5H13.5V18.5H5.5V9.5H0.5Z" fill="#86b0ee" stroke="#5a7ec4"/><path d="M9.5 2.5L15 8H12V17H7.5V8H4Z" fill="#a9c8f6"/></svg>
<svg style="position:absolute;left:944px;top:78px;overflow:visible" width="19" height="19" viewBox="0 0 19 19"><g transform="translate(0,19) scale(1,-1)"><path d="M9.5 0.5L18.5 9.5H13.5V18.5H5.5V9.5H0.5Z" fill="#86b0ee" stroke="#5a7ec4"/><path d="M9.5 2.5L15 8H12V17H7.5V8H4Z" fill="#a9c8f6"/></g></svg>
<svg style="position:absolute;left:969px;top:79px;overflow:visible" width="20" height="18" viewBox="0 0 20 18"><rect x="0.5" y="0.5" width="19" height="17" fill="#fff" stroke="#8a8a98"/><line x1="1" y1="4.5" x2="19" y2="4.5" stroke="#c4c4da"/><line x1="1" y1="8.5" x2="19" y2="8.5" stroke="#c4c4da"/><line x1="1" y1="13.5" x2="19" y2="13.5" stroke="#c4c4da"/><line x1="7.5" y1="1" x2="7.5" y2="17" stroke="#c4c4da"/><line x1="13.5" y1="1" x2="13.5" y2="17" stroke="#c4c4da"/><rect x="1" y="8.5" width="18" height="4" fill="#9bd0f0"/><path d="M14 17H21L17.5 20Z" fill="#111"/></svg>
<svg style="position:absolute;left:126px;top:85px" width="9" height="6"><path d="M1 1L4.5 4.5L8 1" fill="none" stroke="#333" stroke-width="1.5"/></svg>
<div style="position:absolute;left:192px;top:114px;width:786px;height:623px;background:#aecbea;border:1px solid #8aa2bd"></div>
<div style="position:absolute;left:198px;top:140px;width:774px;height:591px;background:#f0f0f0"></div>
<div style="position:absolute;left:544px;top:119.0px;height:18px;line-height:18px;white-space:nowrap;font-size:13.1px;color:#2d3b4a">Katalogi norm</div>
<div style="position:absolute;left:200px;top:121px;width:12px;height:12px;background:#fff;border:1px solid #bcd;border-top:2px solid #3a87cc"></div>
<div style="position:absolute;left:896px;top:126px;width:8px;height:2px;background:#4a5460"></div>
<div style="position:absolute;left:918px;top:120px;width:9px;height:8px;border:1px solid #222;border-top-width:2px"></div>
<div style="position:absolute;left:934px;top:115px;width:38px;height:17px;background:#c9504b"></div>
<svg style="position:absolute;left:949px;top:120px" width="9" height="8"><path d="M1 1L8 7M8 1L1 7" stroke="#fff" stroke-width="2"/></svg>
<div style="position:absolute;left:198px;top:140px;width:774px;height:1px;background:#8fa3b8"></div>
<div style="position:absolute;left:198px;top:141px;width:774px;height:1px;background:#f8f8f8"></div>
<div style="position:absolute;left:198px;top:169px;width:774px;height:1px;background:#a4a4a4"></div>
<div style="position:absolute;left:198px;top:170px;width:774px;height:1px;background:#c4c4c4"></div>
<div style="position:absolute;left:199px;top:171px;width:773px;height:543px;background:#a8c9f0;border-top:1px solid #f4f4f4;border-left:1px solid #8c8c8c;border-right:2px solid #7c7c7c;border-bottom:2px solid #7c7c7c"></div>
<div style="position:absolute;left:205px;top:173.0px;height:14px;line-height:14px;white-space:nowrap;font-weight:bold;color:#1a2a8c">Wykaz katalogów</div>
<div style="position:absolute;left:202px;top:188px;width:767px;height:522px;background:#f0f0f0"></div>
<div style="position:absolute;left:203px;top:193px;width:133px;height:19px;background:#fff;border:1px solid #b8b8b8"></div>
<div style="position:absolute;left:207px;top:195.0px;height:14px;line-height:14px;white-space:nowrap;font-size:9.2px">Symbol</div>
<svg style="position:absolute;left:202px;top:147px;overflow:visible" width="20" height="18" viewBox="0 0 20 18"><rect x="0.5" y="0.5" width="19" height="17" fill="#fff" stroke="#8a8a98"/><line x1="1" y1="4.5" x2="19" y2="4.5" stroke="#c4c4da"/><line x1="1" y1="8.5" x2="19" y2="8.5" stroke="#c4c4da"/><line x1="1" y1="13.5" x2="19" y2="13.5" stroke="#c4c4da"/><line x1="7.5" y1="1" x2="7.5" y2="17" stroke="#c4c4da"/><line x1="13.5" y1="1" x2="13.5" y2="17" stroke="#c4c4da"/><rect x="1" y="8.5" width="18" height="4" fill="#9bd0f0"/><path d="M14 17H21L17.5 20Z" fill="#111"/></svg>
<div style="position:absolute;left:228px;top:145px;width:1px;height:22px;background:#a8a8a8"></div>
<div style="position:absolute;left:229px;top:145px;width:1px;height:22px;background:#fff"></div>
<svg style="position:absolute;left:236px;top:147px;overflow:visible" width="20" height="18" viewBox="0 0 20 18"><rect x="0.5" y="0.5" width="19" height="17" fill="#fff" stroke="#8a8a8a"/><rect x="1" y="1" width="18" height="3" fill="#8db3ee"/><line x1="1" y1="11.5" x2="19" y2="11.5" stroke="#8a8aaa"/><ellipse cx="10" cy="11.5" rx="3" ry="3.5" fill="#333"/><line x1="1" y1="11.5" x2="19" y2="11.5" stroke="#9aa0c8" stroke-width="1"/></svg>
<svg style="position:absolute;left:263px;top:147px;overflow:visible" width="20" height="18" viewBox="0 0 20 18"><rect x="0.5" y="0.5" width="19" height="17" fill="#fff" stroke="#8a8a8a"/><rect x="1" y="1" width="18" height="3" fill="#8db3ee"/><line x1="10.5" y1="4" x2="10.5" y2="17" stroke="#8a8aaa"/><ellipse cx="10.5" cy="10.5" rx="3.5" ry="3" fill="#333"/><line x1="10.5" y1="5" x2="10.5" y2="17" stroke="#9aa0c8"/></svg>
<svg style="position:absolute;left:865px;top:145px;overflow:visible" width="21" height="20" viewBox="0 0 21 20"><rect x="0.5" y="0.5" width="9.5" height="9" rx="1.5" fill="#8aaee8" stroke="#5a7ec0"/><text x="5.2" y="8.6" text-anchor="middle" font-family="Liberation Sans" font-weight="bold" font-size="10" fill="#111">+</text><rect x="11.5" y="0.5" width="9.5" height="9" rx="1.5" fill="#8aaee8" stroke="#5a7ec0"/><text x="16.2" y="8.6" text-anchor="middle" font-family="Liberation Sans" font-weight="bold" font-size="10" fill="#111">−</text><rect x="0.5" y="10.5" width="9.5" height="9" rx="1.5" fill="#8aaee8" stroke="#5a7ec0"/><text x="5.2" y="18.6" text-anchor="middle" font-family="Liberation Sans" font-weight="bold" font-size="10" fill="#111">×</text><rect x="11.5" y="10.5" width="9.5" height="9" rx="1.5" fill="#8aaee8" stroke="#5a7ec0"/><text x="16.2" y="18.6" text-anchor="middle" font-family="Liberation Sans" font-weight="bold" font-size="10" fill="#111">=</text></svg>
<svg style="position:absolute;left:891px;top:145px;overflow:visible" width="21" height="20" viewBox="0 0 21 20"><path d="M7 7L17.5 17.5" stroke="#6a6a6a" stroke-width="4.5" stroke-linecap="round"/><path d="M7 7L17.5 17.5" stroke="#d4d4d4" stroke-width="2.4" stroke-linecap="round"/><circle cx="5.5" cy="5.5" r="4.8" fill="#d4d4d4" stroke="#6a6a6a" stroke-width="1.4"/><path d="M0 2.5L3.5 6L6 3.5L2.5 0Z" fill="#f0f0f0"/><path d="M10 11L17 4" stroke="#6a6a6a" stroke-width="4"/><path d="M10 11L17 4" stroke="#c8c8c8" stroke-width="2"/><path d="M13.5 1.5L20 8" stroke="#6a6a6a" stroke-width="4" stroke-linecap="round"/><path d="M13.5 1.5L20 8" stroke="#d0d0d0" stroke-width="2" stroke-linecap="round"/><path d="M3 18L9.5 11.5" stroke="#4a6eb0" stroke-width="5" stroke-linecap="round"/><path d="M3 18L9.5 11.5" stroke="#8ab0f0" stroke-width="3" stroke-linecap="round"/></svg>
<svg style="position:absolute;left:919px;top:145px;overflow:visible" width="20" height="20" viewBox="0 0 20 20"><circle cx="10" cy="10" r="9.3" fill="#86abee" stroke="#4a6cb4" stroke-width="1.4"/><text x="10" y="15.6" text-anchor="middle" font-family="Liberation Sans" font-weight="bold" font-size="15.5" fill="#fff">?</text></svg>
<svg style="position:absolute;left:945px;top:145px;overflow:visible" width="22" height="21" viewBox="0 0 22 21"><path d="M11 6L16 0" stroke="#8a8a8a" stroke-width="2.5"/><rect x="0.5" y="5.5" width="21" height="3.5" fill="#e04a40" stroke="#a03030"/><path d="M2 9H20L17.5 20H4.5Z" fill="#7a9ae8" stroke="#4a64b0"/><g fill="#fff"><rect x="6" y="11" width="2" height="2"/><rect x="10" y="11" width="2" height="2"/><rect x="14" y="11" width="2" height="2"/><rect x="6" y="15" width="2" height="2"/><rect x="10" y="15" width="2" height="2"/><rect x="14" y="15" width="2" height="2"/></g></svg>
<svg style="position:absolute;left:345px;top:195px;overflow:visible" width="20" height="18" viewBox="0 0 20 18"><rect x="0.5" y="0.5" width="19" height="17" fill="#fff" stroke="#8a8a8a"/><rect x="1" y="1" width="18" height="3" fill="#8db3ee"/><line x1="10.5" y1="4" x2="10.5" y2="17" stroke="#8a8a8a"/><line x1="3" y1="7.5" x2="8" y2="7.5" stroke="#bbb"/><line x1="3" y1="9.5" x2="8" y2="9.5" stroke="#bbb"/><line x1="3" y1="11.5" x2="8" y2="11.5" stroke="#bbb"/><line x1="3" y1="13.5" x2="8" y2="13.5" stroke="#bbb"/><line x1="3" y1="15.5" x2="8" y2="15.5" stroke="#bbb"/></svg>
<div style="position:absolute;left:369px;top:190px;width:27px;height:26px;background:#c4ddf6;border:1px solid #8cbbe8"></div>
<svg style="position:absolute;left:374px;top:196px;overflow:visible" width="20" height="18" viewBox="0 0 20 18"><rect x="1" y="7.5" width="15" height="10" fill="#fff" stroke="#222"/><rect x="1.5" y="12" width="14" height="2" fill="#5a94e0"/><ellipse cx="13" cy="7" rx="7" ry="5" fill="#f2f6fa" stroke="#c08a40" stroke-width="2"/><circle cx="13" cy="7" r="3" fill="#3a78d0"/><circle cx="13" cy="6.5" r="1.2" fill="#111"/></svg>
<svg style="position:absolute;left:399px;top:193px;overflow:visible" width="20" height="20" viewBox="0 0 20 20"><rect x="3" y="0.5" width="5" height="5" rx="1" fill="#707890"/><rect x="12" y="0.5" width="5" height="5" rx="1" fill="#707890"/><rect x="0.5" y="5" width="8.5" height="14" rx="1.5" fill="#8a92aa" stroke="#4a5268"/><rect x="11" y="5" width="8.5" height="14" rx="1.5" fill="#8a92aa" stroke="#4a5268"/><rect x="8" y="7" width="4" height="6" fill="#4a5268"/><rect x="2" y="8" width="3" height="9" fill="#c8cee0"/><rect x="12.5" y="8" width="3" height="9" fill="#c8cee0"/></svg>
<svg style="position:absolute;left:795px;top:195px;overflow:visible" width="20" height="18" viewBox="0 0 20 18"><rect x="0.5" y="8.5" width="15" height="9" fill="#fff" stroke="#222"/><rect x="1" y="13.5" width="14" height="2" fill="#5a94e0"/><circle cx="12" cy="6.5" r="5" fill="#bcd8e8" stroke="#3a3a3a" stroke-width="2"/><path d="M15 10L19 13" stroke="#5a78c0" stroke-width="3"/></svg>
<div style="position:absolute;left:820px;top:192px;width:1px;height:22px;background:#a8a8a8"></div>
<div style="position:absolute;left:821px;top:192px;width:1px;height:22px;background:#fff"></div>
<svg style="position:absolute;left:828px;top:193px;overflow:visible" width="20" height="20" viewBox="0 0 20 20"><circle cx="10" cy="10" r="9.3" fill="#86abee" stroke="#4a6cb4" stroke-width="1.4"/><circle cx="10" cy="5.2" r="1.8" fill="#fff"/><rect x="8.2" y="8" width="3.6" height="8" fill="#fff"/></svg>
<svg style="position:absolute;left:856px;top:194px;overflow:visible" width="17" height="19" viewBox="0 0 17 19"><text x="8.5" y="7.5" text-anchor="middle" font-family="Liberation Serif" font-weight="bold" font-size="10" fill="#111" textLength="16" lengthAdjust="spacingAndGlyphs">ZS</text><rect x="1" y="9.5" width="15" height="9" fill="#fff" stroke="#222"/><rect x="1.5" y="15" width="14" height="2" fill="#5a94e0"/><rect x="12" y="11" width="2" height="2" fill="#5a94e0"/></svg>
<svg style="position:absolute;left:882px;top:194px;overflow:visible" width="20" height="19" viewBox="0 0 20 19"><text x="10.0" y="7.5" text-anchor="middle" font-family="Liberation Serif" font-weight="bold" font-size="10" fill="#111" textLength="19" lengthAdjust="spacingAndGlyphs">RMS</text><rect x="1" y="9.5" width="18" height="9" fill="#fff" stroke="#222"/><rect x="1.5" y="15" width="17" height="2" fill="#5a94e0"/><rect x="15" y="11" width="2" height="2" fill="#5a94e0"/></svg>
<div style="position:absolute;left:907px;top:192px;width:1px;height:22px;background:#a8a8a8"></div>
<div style="position:absolute;left:908px;top:192px;width:1px;height:22px;background:#fff"></div>
<svg style="position:absolute;left:916px;top:194px;overflow:visible" width="19" height="19" viewBox="0 0 19 19"><path d="M9.5 0.5L18.5 9.5H13.5V18.5H5.5V9.5H0.5Z" fill="#86b0ee" stroke="#5a7ec4"/><path d="M9.5 2.5L15 8H12V17H7.5V8H4Z" fill="#a9c8f6"/></svg>
<svg style="position:absolute;left:943px;top:194px;overflow:visible" width="19" height="19" viewBox="0 0 19 19"><g transform="translate(0,19) scale(1,-1)"><path d="M9.5 0.5L18.5 9.5H13.5V18.5H5.5V9.5H0.5Z" fill="#86b0ee" stroke="#5a7ec4"/><path d="M9.5 2.5L15 8H12V17H7.5V8H4Z" fill="#a9c8f6"/></g></svg>
<svg style="position:absolute;left:324px;top:199px" width="9" height="6"><path d="M1 1L4.5 4.5L8 1" fill="none" stroke="#333" stroke-width="1.5"/></svg>
<div style="position:absolute;left:203px;top:217px;width:154px;height:493px;background:#fff;border-top:1px solid #a0a0a0;border-left:1px solid #dcdcdc"></div>
<div style="position:absolute;left:204px;top:220px;width:152px;height:1px;background:#c4c4c4"></div>
<div style="position:absolute;left:204px;top:220px;width:1px;height:490px;background:#c4c4c4"></div>
<div style="position:absolute;left:205px;top:221px;width:151px;height:17px;background:#e8e8e8"></div>
<div style="position:absolute;left:205px;top:237px;width:151px;height:1px;background:#d4d4d4"></div>
<div style="position:absolute;left:208px;top:222.5px;height:14px;line-height:14px;white-space:nowrap;">KNR (seria 2-)</div>
<div style="position:absolute;left:205px;top:255px;width:151px;height:1px;background:#d4d4d4"></div>
<div style="position:absolute;left:208px;top:239.86px;height:14px;line-height:14px;white-space:nowrap;">KNR (seria 4-)</div>
<div style="position:absolute;left:205px;top:272px;width:151px;height:1px;background:#d4d4d4"></div>
<div style="position:absolute;left:208px;top:257.22px;height:14px;line-height:14px;white-space:nowrap;">KNR (seria 5-)</div>
<div style="position:absolute;left:205px;top:289px;width:151px;height:1px;background:#d4d4d4"></div>
<div style="position:absolute;left:208px;top:274.58px;height:14px;line-height:14px;white-space:nowrap;">KNR (seria 7-)</div>
<div style="position:absolute;left:205px;top:307px;width:151px;height:1px;background:#d4d4d4"></div>
<div style="position:absolute;left:208px;top:291.94px;height:14px;line-height:14px;white-space:nowrap;">KNR (seria 9-)</div>
<div style="position:absolute;left:205px;top:324px;width:151px;height:1px;background:#d4d4d4"></div>
<div style="position:absolute;left:208px;top:309.3px;height:14px;line-height:14px;white-space:nowrap;">KNR (seria 0-)</div>
<div style="position:absolute;left:205px;top:341px;width:151px;height:1px;background:#d4d4d4"></div>
<div style="position:absolute;left:208px;top:326.66px;height:14px;line-height:14px;white-space:nowrap;">KNR (seria 13-)</div>
<div style="position:absolute;left:205px;top:359px;width:151px;height:1px;background:#d4d4d4"></div>
<div style="position:absolute;left:208px;top:344.02px;height:14px;line-height:14px;white-space:nowrap;">KNR (seria 15-)</div>
<div style="position:absolute;left:205px;top:376px;width:151px;height:1px;background:#d4d4d4"></div>
<div style="position:absolute;left:208px;top:361.38px;height:14px;line-height:14px;white-space:nowrap;">KNR (seria 17-)</div>
<div style="position:absolute;left:205px;top:393px;width:151px;height:1px;background:#d4d4d4"></div>
<div style="position:absolute;left:208px;top:378.74px;height:14px;line-height:14px;white-space:nowrap;">KNR (seria 19-)</div>
<div style="position:absolute;left:205px;top:411px;width:151px;height:1px;background:#d4d4d4"></div>
<div style="position:absolute;left:208px;top:396.09999999999997px;height:14px;line-height:14px;white-space:nowrap;">KNR (seria 21-)</div>
<div style="position:absolute;left:205px;top:428px;width:151px;height:1px;background:#d4d4d4"></div>
<div style="position:absolute;left:208px;top:413.46px;height:14px;line-height:14px;white-space:nowrap;">KNR (Athenasoft)</div>
<div style="position:absolute;left:205px;top:445px;width:151px;height:1px;background:#d4d4d4"></div>
<div style="position:absolute;left:208px;top:430.82px;height:14px;line-height:14px;white-space:nowrap;">KNR (Bistyp)</div>
<div style="position:absolute;left:205px;top:463px;width:151px;height:1px;background:#d4d4d4"></div>
<div style="position:absolute;left:208px;top:448.18px;height:14px;line-height:14px;white-space:nowrap;">KNR (Emiter)</div>
<div style="position:absolute;left:205px;top:480px;width:151px;height:1px;background:#d4d4d4"></div>
<div style="position:absolute;left:208px;top:465.54px;height:14px;line-height:14px;white-space:nowrap;">KNR (Instal)</div>
<div style="position:absolute;left:205px;top:498px;width:151px;height:1px;background:#d4d4d4"></div>
<div style="position:absolute;left:208px;top:482.9px;height:14px;line-height:14px;white-space:nowrap;">KNR (Koprin)</div>
<div style="position:absolute;left:205px;top:515px;width:151px;height:1px;background:#d4d4d4"></div>
<div style="position:absolute;left:208px;top:500.26px;height:14px;line-height:14px;white-space:nowrap;">KNR (Koprinet)</div>
<div style="position:absolute;left:205px;top:532px;width:151px;height:1px;background:#d4d4d4"></div>
<div style="position:absolute;left:208px;top:517.6200000000001px;height:14px;line-height:14px;white-space:nowrap;">KNR (Orgbud)</div>
<div style="position:absolute;left:205px;top:550px;width:151px;height:1px;background:#d4d4d4"></div>
<div style="position:absolute;left:208px;top:534.98px;height:14px;line-height:14px;white-space:nowrap;">KNR (Promocja)</div>
<div style="position:absolute;left:205px;top:567px;width:151px;height:1px;background:#d4d4d4"></div>
<div style="position:absolute;left:208px;top:552.34px;height:14px;line-height:14px;white-space:nowrap;">KNR (Wacetob)</div>
<div style="position:absolute;left:205px;top:584px;width:151px;height:1px;background:#d4d4d4"></div>
<div style="position:absolute;left:208px;top:569.7px;height:14px;line-height:14px;white-space:nowrap;">KNNR</div>
<div style="position:absolute;left:205px;top:602px;width:151px;height:1px;background:#d4d4d4"></div>
<div style="position:absolute;left:208px;top:587.0600000000001px;height:14px;line-height:14px;white-space:nowrap;">KNNR (Wacetob)</div>
<div style="position:absolute;left:205px;top:619px;width:151px;height:1px;background:#d4d4d4"></div>
<div style="position:absolute;left:208px;top:604.4200000000001px;height:14px;line-height:14px;white-space:nowrap;">KNCK</div>
<div style="position:absolute;left:205px;top:636px;width:151px;height:1px;background:#d4d4d4"></div>
<div style="position:absolute;left:208px;top:621.78px;height:14px;line-height:14px;white-space:nowrap;">KNK</div>
<div style="position:absolute;left:205px;top:654px;width:151px;height:1px;background:#d4d4d4"></div>
<div style="position:absolute;left:208px;top:639.1400000000001px;height:14px;line-height:14px;white-space:nowrap;">KNKRB</div>
<div style="position:absolute;left:205px;top:671px;width:151px;height:1px;background:#d4d4d4"></div>
<div style="position:absolute;left:208px;top:656.5px;height:14px;line-height:14px;white-space:nowrap;">KNP</div>
<div style="position:absolute;left:205px;top:689px;width:151px;height:1px;background:#d4d4d4"></div>
<div style="position:absolute;left:208px;top:673.8600000000001px;height:14px;line-height:14px;white-space:nowrap;">KNRDL</div>
<div style="position:absolute;left:205px;top:706px;width:151px;height:1px;background:#d4d4d4"></div>
<div style="position:absolute;left:208px;top:691.22px;height:14px;line-height:14px;white-space:nowrap;">KNZ</div>
<div style="position:absolute;left:356px;top:219px;width:1px;height:491px;background:#c8c8c8"></div>
<svg style="position:absolute;left:364px;top:222px" width="8" height="6"><path d="M1 5L4 1.5L7 5" fill="none" stroke="#3a3a3a" stroke-width="1.8"/></svg>
<div style="position:absolute;left:361px;top:232px;width:12px;height:14px;background:#cdcdcd"></div>
<svg style="position:absolute;left:364px;top:700px" width="8" height="6"><path d="M1 1L4 4.5L7 1" fill="none" stroke="#3a3a3a" stroke-width="1.8"/></svg>
<div style="position:absolute;left:377px;top:217px;width:577px;height:493px;background:#fff;border-top:1px solid #a0a0a0;border-left:1px solid #a0a0a0"></div>
<div style="position:absolute;left:380px;top:220px;width:570px;height:1px;background:#c4c4c4"></div>
<div style="position:absolute;left:380px;top:220px;width:1px;height:490px;background:#c4c4c4"></div>
<div style="position:absolute;left:467px;top:220px;width:1px;height:490px;background:#cfcfcf"></div>
<div style="position:absolute;left:950px;top:220px;width:1px;height:490px;background:#d0d0d0"></div>
<div style="position:absolute;left:380px;top:241px;width:570px;height:2px;background:#b8b8b8"></div>
<div style="position:absolute;left:384px;top:224.0px;height:14px;line-height:14px;white-space:nowrap;">Symbol</div>
<svg style="position:absolute;left:384px;top:236px" width="8" height="5"><path d="M0 5L4 1L8 5Z" fill="#111"/></svg>
<div style="position:absolute;left:472px;top:224.0px;height:14px;line-height:14px;white-space:nowrap;">Tytuł&nbsp;&nbsp;&nbsp;&nbsp;(liczba katalogów: 419)</div>
<div style="position:absolute;left:381px;top:265px;width:569px;height:1px;background:#cfcfcf"></div>
<div style="position:absolute;left:472px;top:250.0px;height:14px;line-height:14px;white-space:nowrap;font-weight:bold;color:#2a2ab0">KNR (seria 2-)</div>
<div style="position:absolute;left:381px;top:282px;width:569px;height:1px;background:#cfcfcf"></div>
<div style="position:absolute;left:384px;top:266.5px;height:14px;line-height:14px;white-space:nowrap;">KNR 2-01</div>
<div style="position:absolute;left:472px;top:266.5px;height:14px;line-height:14px;white-space:nowrap;">Budowle i roboty ziemne</div>
<div style="position:absolute;left:381px;top:313px;width:569px;height:1px;background:#cfcfcf"></div>
<div style="position:absolute;left:384px;top:290.5px;height:14px;line-height:14px;white-space:nowrap;">KNR 2-01u1</div>
<div style="position:absolute;left:472px;top:283.5px;line-height:14px;white-space:nowrap">Mechaniczne roboty ziemne w wykopach liniowych o ścianach pionowych zabezpieczonych obudową<br>Typ OW WRONKI</div>
<div style="position:absolute;left:381px;top:314px;width:86px;height:16px;background:#e6e6e6"></div>
<div style="position:absolute;left:468px;top:314px;width:482px;height:16px;background:#aad5f8"></div>
<div style="position:absolute;left:381px;top:330px;width:569px;height:1px;background:#cfcfcf"></div>
<div style="position:absolute;left:384px;top:314.5px;height:14px;line-height:14px;white-space:nowrap;">KNR 2-02</div>
<div style="position:absolute;left:472px;top:314.5px;height:14px;line-height:14px;white-space:nowrap;">Konstrukcje budowlane</div>
<div style="position:absolute;left:381px;top:347px;width:569px;height:1px;background:#cfcfcf"></div>
<div style="position:absolute;left:384px;top:331.5px;height:14px;line-height:14px;white-space:nowrap;">KNR 2-02s</div>
<div style="position:absolute;left:472px;top:331.5px;height:14px;line-height:14px;white-space:nowrap;">Konstrukcje budowlane</div>
<div style="position:absolute;left:381px;top:364px;width:569px;height:1px;background:#cfcfcf"></div>
<div style="position:absolute;left:384px;top:348.5px;height:14px;line-height:14px;white-space:nowrap;">KNR 2-02u1</div>
<div style="position:absolute;left:472px;top:348.5px;height:14px;line-height:14px;white-space:nowrap;">Ściany z boazerii i płytek, posadzki z płytek, naciągi kominów. Stropy TERIWA, FILIGRAN</div>
<div style="position:absolute;left:381px;top:382px;width:569px;height:1px;background:#cfcfcf"></div>
<div style="position:absolute;left:384px;top:366.0px;height:14px;line-height:14px;white-space:nowrap;">KNR 2-03</div>
<div style="position:absolute;left:472px;top:366.0px;height:14px;line-height:14px;white-space:nowrap;">Konstrukcje budowlane chłodni kominowych i wentylatorowych</div>
<div style="position:absolute;left:381px;top:399px;width:569px;height:1px;background:#cfcfcf"></div>
<div style="position:absolute;left:384px;top:383.5px;height:14px;line-height:14px;white-space:nowrap;">KNR 2-04</div>
<div style="position:absolute;left:472px;top:383.5px;height:14px;line-height:14px;white-space:nowrap;">Konstrukcje budowlane pieców przemysłowych, silosów, kotłów i kominów</div>
<div style="position:absolute;left:381px;top:417px;width:569px;height:1px;background:#cfcfcf"></div>
<div style="position:absolute;left:384px;top:401.0px;height:14px;line-height:14px;white-space:nowrap;">KNR 2-05</div>
<div style="position:absolute;left:472px;top:401.0px;height:14px;line-height:14px;white-space:nowrap;">Konstrukcje metalowe</div>
<div style="position:absolute;left:381px;top:434px;width:569px;height:1px;background:#cfcfcf"></div>
<div style="position:absolute;left:384px;top:418.5px;height:14px;line-height:14px;white-space:nowrap;">KNR 2-09</div>
<div style="position:absolute;left:472px;top:418.5px;height:14px;line-height:14px;white-space:nowrap;">Nawierzchnie tramwajowe</div>
<div style="position:absolute;left:381px;top:451px;width:569px;height:1px;background:#cfcfcf"></div>
<div style="position:absolute;left:384px;top:435.5px;height:14px;line-height:14px;white-space:nowrap;">KNR 2-10</div>
<div style="position:absolute;left:472px;top:435.5px;height:14px;line-height:14px;white-space:nowrap;">Fundamenty specjalne</div>
<div style="position:absolute;left:381px;top:469px;width:569px;height:1px;background:#cfcfcf"></div>
<div style="position:absolute;left:384px;top:453.0px;height:14px;line-height:14px;white-space:nowrap;">KNR 2-11</div>
<div style="position:absolute;left:472px;top:453.0px;height:14px;line-height:14px;white-space:nowrap;">Melioracje i regulacje rzek i potoków oraz budowle i urządzenia melioracji wodnych</div>
<div style="position:absolute;left:381px;top:486px;width:569px;height:1px;background:#cfcfcf"></div>
<div style="position:absolute;left:384px;top:470.5px;height:14px;line-height:14px;white-space:nowrap;">KNR 2-13</div>
<div style="position:absolute;left:472px;top:470.5px;height:14px;line-height:14px;white-space:nowrap;">Konstrukcje budowli wodnych śródlądowych</div>
<div style="position:absolute;left:381px;top:503px;width:569px;height:1px;background:#cfcfcf"></div>
<div style="position:absolute;left:384px;top:487.5px;height:14px;line-height:14px;white-space:nowrap;">KNR 2-14</div>
<div style="position:absolute;left:472px;top:487.5px;height:14px;line-height:14px;white-space:nowrap;">Konstrukcje budowli morskich</div>
<div style="position:absolute;left:381px;top:520px;width:569px;height:1px;background:#cfcfcf"></div>
<div style="position:absolute;left:384px;top:504.5px;height:14px;line-height:14px;white-space:nowrap;">KNR 2-15</div>
<div style="position:absolute;left:472px;top:504.5px;height:14px;line-height:14px;white-space:nowrap;">Instalacje wewnętrzne wod-kan, gazowe i centralnego ogrzewania</div>
<div style="position:absolute;left:381px;top:551px;width:569px;height:1px;background:#cfcfcf"></div>
<div style="position:absolute;left:384px;top:528.5px;height:14px;line-height:14px;white-space:nowrap;">KNR 2-15u1</div>
<div style="position:absolute;left:472px;top:521.5px;line-height:14px;white-space:nowrap">Montaż rurociągów z rur polipropylenowych, kosze ssące o połączeniach gwintów, zawory<br>napowietrzające</div>
<div style="position:absolute;left:381px;top:568px;width:569px;height:1px;background:#cfcfcf"></div>
<div style="position:absolute;left:384px;top:552.5px;height:14px;line-height:14px;white-space:nowrap;">KNR 2-15u2</div>
<div style="position:absolute;left:472px;top:552.5px;height:14px;line-height:14px;white-space:nowrap;">Instalacje wewnętrzne sanitarne systemu Geberit</div>
<div style="position:absolute;left:381px;top:586px;width:569px;height:1px;background:#cfcfcf"></div>
<div style="position:absolute;left:384px;top:570.0px;height:14px;line-height:14px;white-space:nowrap;">KNR 2-16</div>
<div style="position:absolute;left:472px;top:570.0px;height:14px;line-height:14px;white-space:nowrap;">Izolacje termiczne</div>
<div style="position:absolute;left:381px;top:603px;width:569px;height:1px;background:#cfcfcf"></div>
<div style="position:absolute;left:384px;top:587.5px;height:14px;line-height:14px;white-space:nowrap;">KNR 2-17</div>
<div style="position:absolute;left:472px;top:587.5px;height:14px;line-height:14px;white-space:nowrap;">Instalacje wentylacyjne, klimatyzacyjne</div>
<div style="position:absolute;left:381px;top:620px;width:569px;height:1px;background:#cfcfcf"></div>
<div style="position:absolute;left:384px;top:604.5px;height:14px;line-height:14px;white-space:nowrap;">KNR 2-18</div>
<div style="position:absolute;left:472px;top:604.5px;height:14px;line-height:14px;white-space:nowrap;">Zewnętrzne sieci wodociągowe i kanalizacyjne</div>
<div style="position:absolute;left:381px;top:637px;width:569px;height:1px;background:#cfcfcf"></div>
<div style="position:absolute;left:384px;top:621.5px;height:14px;line-height:14px;white-space:nowrap;">KNR 2-19</div>
<div style="position:absolute;left:472px;top:621.5px;height:14px;line-height:14px;white-space:nowrap;">Zewnętrzna sieć gazociągowa</div>
<div style="position:absolute;left:381px;top:655px;width:569px;height:1px;background:#cfcfcf"></div>
<div style="position:absolute;left:384px;top:639.0px;height:14px;line-height:14px;white-space:nowrap;">KNR 2-19u1</div>
<div style="position:absolute;left:472px;top:639.0px;height:14px;line-height:14px;white-space:nowrap;">Zewnętrzna sieć gazociągowa</div>
<div style="position:absolute;left:381px;top:672px;width:569px;height:1px;background:#cfcfcf"></div>
<div style="position:absolute;left:384px;top:656.5px;height:14px;line-height:14px;white-space:nowrap;">KNR 2-20</div>
<div style="position:absolute;left:472px;top:656.5px;height:14px;line-height:14px;white-space:nowrap;">Zewnętrzna sieć cieplna</div>
<div style="position:absolute;left:381px;top:689px;width:569px;height:1px;background:#cfcfcf"></div>
<div style="position:absolute;left:384px;top:673.5px;height:14px;line-height:14px;white-space:nowrap;">KNR 2-20u1</div>
<div style="position:absolute;left:472px;top:673.5px;height:14px;line-height:14px;white-space:nowrap;">Montaż sieci cieplnych z rur preizolowanych</div>
<div style="position:absolute;left:381px;top:706px;width:569px;height:1px;background:#cfcfcf"></div>
<div style="position:absolute;left:384px;top:690.5px;height:14px;line-height:14px;white-space:nowrap;">KNR 2-21</div>
<div style="position:absolute;left:472px;top:690.5px;height:14px;line-height:14px;white-space:nowrap;">Tereny zieleni</div>
<svg style="position:absolute;left:609px;top:325px" width="13" height="20"><path d="M0.5 0.5L0.5 14.5L3.8 11.4L6.6 17.8L9 16.8L6.3 10.5L10.8 10.5Z" fill="#fff" stroke="#111" stroke-width="1" stroke-linejoin="miter"/></svg>
<svg style="position:absolute;left:957px;top:222px" width="8" height="6"><path d="M1 5L4 1.5L7 5" fill="none" stroke="#3a3a3a" stroke-width="1.8"/></svg>
<div style="position:absolute;left:955px;top:232px;width:12px;height:14px;background:#cdcdcd"></div>
<svg style="position:absolute;left:957px;top:700px" width="8" height="6"><path d="M1 1L4 4.5L7 1" fill="none" stroke="#3a3a3a" stroke-width="1.8"/></svg>
<div style="position:absolute;left:198px;top:714px;width:774px;height:16px;background:#f0f0f0;border-top:1px solid #fff"></div>
<svg style="position:absolute;left:962px;top:720px" width="10" height="10"><rect x="8" y="0" width="2" height="2" fill="#b8b8b8"/><rect x="4" y="4" width="2" height="2" fill="#b8b8b8"/><rect x="8" y="4" width="2" height="2" fill="#b8b8b8"/><rect x="0" y="8" width="2" height="2" fill="#b8b8b8"/><rect x="4" y="8" width="2" height="2" fill="#b8b8b8"/><rect x="8" y="8" width="2" height="2" fill="#b8b8b8"/></svg>
<svg style="position:absolute;left:982px;top:762px" width="10" height="10"><rect x="8" y="0" width="2" height="2" fill="#b8b8b8"/><rect x="4" y="4" width="2" height="2" fill="#b8b8b8"/><rect x="8" y="4" width="2" height="2" fill="#b8b8b8"/><rect x="0" y="8" width="2" height="2" fill="#b8b8b8"/><rect x="4" y="8" width="2" height="2" fill="#b8b8b8"/><rect x="8" y="8" width="2" height="2" fill="#b8b8b8"/></svg>
</body></html>
